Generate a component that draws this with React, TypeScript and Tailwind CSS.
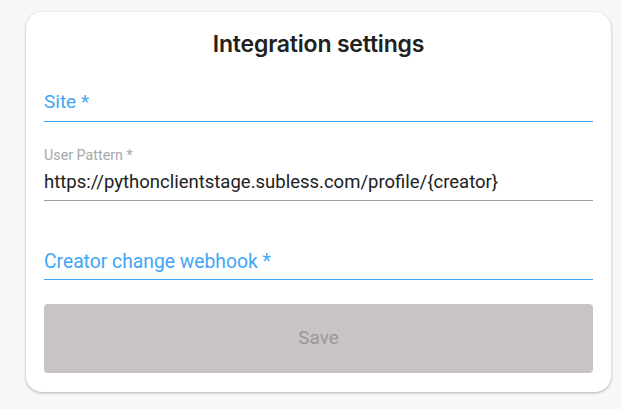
export default function App() {
  return (
    <div className="w-[622px] h-[409px] bg-[#f8f8f8] pt-[12px] pl-[26px]" style={{ fontFamily: "Roboto, 'Liberation Sans', sans-serif" }}>
      <div className="w-[585px] h-[380px] bg-white rounded-[16px] shadow-[0_1px_3px_rgba(0,0,0,0.3)] px-[18px] flex flex-col">
        <div className="h-[64px] flex items-center justify-center">
          <h1 className="text-[23px] font-semibold text-[#212121] tracking-[-0.2px]" style={{ fontFamily: "Inter, 'Noto Sans', sans-serif" }}>Integration settings</h1>
        </div>
        <div className="h-[46px] flex items-end pb-[8px] border-b border-[#42a5f5]">
          <span className="text-[19px] leading-[22px] text-[#42a5f5]">Site *</span>
        </div>
        <div className="pt-[26px] pb-[7px] border-b border-[#9e9e9e] flex flex-col">
          <span className="text-[14.3px] leading-[14px] text-[#a8a8a8]">User Pattern *</span>
          <span className="mt-[9px] text-[18.5px] leading-[22px] text-[#212121]">https://pythonclientstage.subless.com/profile/{"{creator}"}</span>
        </div>
        <div className="h-[79px] flex items-end pb-[6px] border-b border-[#42a5f5]">
          <span className="text-[19.3px] leading-[22px] text-[#42a5f5]">Creator change webhook *</span>
        </div>
        <button className="mt-[24px] h-[69px] w-full rounded-[4px] bg-[#c8c4c5] text-[19px] text-[#9a9697]">Save</button>
      </div>
    </div>
  );
}
